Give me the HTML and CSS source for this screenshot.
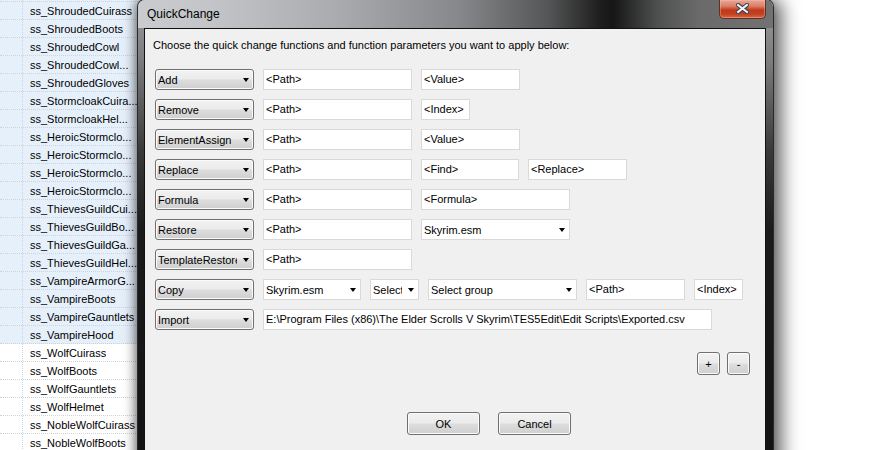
FILE: index.html
```
<!DOCTYPE html>
<html>
<head>
<meta charset="utf-8">
<link rel="stylesheet" href="styles.css">
</head>
<body>
<div class="list">
  <div class="row sel"><span class="gut"></span><span class="name">ss_ShroudedArmor</span></div>
  <div class="row sel"><span class="gut"></span><span class="name">ss_ShroudedCuirass</span></div>
  <div class="row sel"><span class="gut"></span><span class="name">ss_ShroudedBoots</span></div>
  <div class="row sel"><span class="gut"></span><span class="name">ss_ShroudedCowl</span></div>
  <div class="row sel"><span class="gut"></span><span class="name">ss_ShroudedCowl...</span></div>
  <div class="row sel"><span class="gut"></span><span class="name">ss_ShroudedGloves</span></div>
  <div class="row sel"><span class="gut"></span><span class="name">ss_StormcloakCuira...</span></div>
  <div class="row sel"><span class="gut"></span><span class="name">ss_StormcloakHel...</span></div>
  <div class="row sel"><span class="gut"></span><span class="name">ss_HeroicStormclo...</span></div>
  <div class="row sel"><span class="gut"></span><span class="name">ss_HeroicStormclo...</span></div>
  <div class="row sel"><span class="gut"></span><span class="name">ss_HeroicStormclo...</span></div>
  <div class="row sel"><span class="gut"></span><span class="name">ss_HeroicStormclo...</span></div>
  <div class="row sel"><span class="gut"></span><span class="name">ss_ThievesGuildCui...</span></div>
  <div class="row sel"><span class="gut"></span><span class="name">ss_ThievesGuildBo...</span></div>
  <div class="row sel"><span class="gut"></span><span class="name">ss_ThievesGuildGa...</span></div>
  <div class="row sel"><span class="gut"></span><span class="name">ss_ThievesGuildHel...</span></div>
  <div class="row sel"><span class="gut"></span><span class="name">ss_VampireArmorG...</span></div>
  <div class="row sel"><span class="gut"></span><span class="name">ss_VampireBoots</span></div>
  <div class="row sel"><span class="gut"></span><span class="name">ss_VampireGauntlets</span></div>
  <div class="row sel"><span class="gut"></span><span class="name">ss_VampireHood</span></div>
  <div class="row"><span class="gut"></span><span class="name">ss_WolfCuirass</span></div>
  <div class="row"><span class="gut"></span><span class="name">ss_WolfBoots</span></div>
  <div class="row"><span class="gut"></span><span class="name">ss_WolfGauntlets</span></div>
  <div class="row"><span class="gut"></span><span class="name">ss_WolfHelmet</span></div>
  <div class="row"><span class="gut"></span><span class="name">ss_NobleWolfCuirass</span></div>
  <div class="row"><span class="gut"></span><span class="name">ss_NobleWolfBoots</span></div>
</div>

<div class="window">
  <div class="titlebar">
    <span class="title">QuickChange</span>
    <div class="close">
      <svg width="13" height="11" viewBox="0 0 13 11">
        <path d="M2 2 L11 9 M11 2 L2 9" stroke="#3b3f4e" stroke-width="4.2" stroke-linecap="square" fill="none"/>
        <path d="M2 2 L11 9 M11 2 L2 9" stroke="#f4f4f6" stroke-width="2" stroke-linecap="square" fill="none"/>
      </svg>
    </div>
  </div>
  <div class="client">
    <p class="desc">Choose the quick change functions and function parameters you want to apply below:</p>
    <div class="rows">
      <div class="frow">
        <div class="combo btn w99"><span class="ctext">Add</span><i class="arrow"></i></div>
        <div class="field w149">&lt;Path&gt;</div>
        <div class="field w99">&lt;Value&gt;</div>
      </div>
      <div class="frow">
        <div class="combo btn w99"><span class="ctext">Remove</span><i class="arrow"></i></div>
        <div class="field w149">&lt;Path&gt;</div>
        <div class="field w49">&lt;Index&gt;</div>
      </div>
      <div class="frow">
        <div class="combo btn w99"><span class="ctext">ElementAssign</span><i class="arrow"></i></div>
        <div class="field w149">&lt;Path&gt;</div>
        <div class="field w99">&lt;Value&gt;</div>
      </div>
      <div class="frow">
        <div class="combo btn w99"><span class="ctext">Replace</span><i class="arrow"></i></div>
        <div class="field w149">&lt;Path&gt;</div>
        <div class="field w98">&lt;Find&gt;</div>
        <div class="field w99">&lt;Replace&gt;</div>
      </div>
      <div class="frow">
        <div class="combo btn w99"><span class="ctext">Formula</span><i class="arrow"></i></div>
        <div class="field w149">&lt;Path&gt;</div>
        <div class="field w149">&lt;Formula&gt;</div>
      </div>
      <div class="frow">
        <div class="combo btn w99"><span class="ctext">Restore</span><i class="arrow"></i></div>
        <div class="field w149">&lt;Path&gt;</div>
        <div class="combo white w149"><span class="ctext">Skyrim.esm</span><i class="arrow"></i></div>
      </div>
      <div class="frow">
        <div class="combo btn w99"><span class="ctext">TemplateRestore</span><i class="arrow"></i></div>
        <div class="field w149">&lt;Path&gt;</div>
      </div>
      <div class="frow">
        <div class="combo btn w99"><span class="ctext">Copy</span><i class="arrow"></i></div>
        <div class="combo white w98"><span class="ctext">Skyrim.esm</span><i class="arrow"></i></div>
        <div class="combo white w49"><span class="ctext">Select</span><i class="arrow"></i></div>
        <div class="combo white w149"><span class="ctext">Select group</span><i class="arrow"></i></div>
        <div class="field w99">&lt;Path&gt;</div>
        <div class="field w49">&lt;Index&gt;</div>
      </div>
      <div class="frow">
        <div class="combo btn w99"><span class="ctext">Import</span><i class="arrow"></i></div>
        <div class="field w449">E:\Program Files (x86)\The Elder Scrolls V Skyrim\TES5Edit\Edit Scripts\Exported.csv</div>
      </div>
    </div>
    <div class="pm">
      <button class="btn small">+</button>
      <button class="btn small">-</button>
    </div>
    <div class="okrow">
      <button class="btn wide">OK</button>
      <button class="btn wide">Cancel</button>
    </div>
  </div>
</div>
</body>
</html>
```
FILE: styles.css
```
html, body {
  margin: 0;
  padding: 0;
  background: #ffffff;
  overflow: hidden;
  height: 450px;
}
body {
  font-family: "Liberation Sans", Arial, sans-serif;
  font-size: 11px;
  color: #000;
  position: relative;
}

/* background list */
.list {
  width: 142px;
  margin-top: -16px;
}
.row {
  display: flex;
  height: 18px;
  box-sizing: border-box;
  border-bottom: 1px dotted #cdd3da;
  line-height: 18px;
  background: #fff;
}
.row.sel {
  background: #e6f0fb;
}
.gut {
  width: 22px;
  flex: none;
  border-right: 1px dotted #cdd3da;
}
.name {
  padding-left: 7px;
  white-space: nowrap;
}

/* dialog window */
.window {
  position: absolute;
  left: 138px;
  top: 0;
  width: 635px;
  height: 480px;
  border-radius: 7px 7px 0 0;
  background: linear-gradient(to bottom, #9a9b9d 0, #7c7d7f 60px, #3a3a3a 150px, #1b1b1b 230px, #121212 100%);
  box-shadow: 0 0 0 1px #2a2a2a, 6px 2px 18px 3px rgba(0,0,0,0.6), -3px 0 10px rgba(0,0,0,0.35);
  display: flex;
  flex-direction: column;
}
.titlebar {
  position: relative;
  height: 28px;
  flex: none;
  display: flex;
  align-items: center;
  padding-left: 9px;
  border-radius: 7px 7px 0 0;
  background: linear-gradient(90deg, #c9cbce 0px, #c3c5c8 70px, #a9abae 200px, #86888b 320px, #555657 410px, #1e1e1e 462px, #161616 475px, #4f5050 520px, #6a6a6a 560px, #727272 635px);
}
.title {
  font-size: 12px;
  color: #000;
  padding-bottom: 1px;
}
.close {
  position: absolute;
  top: 0;
  right: 7px;
  width: 45px;
  height: 18px;
  border: 1px solid #5e3027;
  border-top: none;
  border-radius: 0 0 5px 5px;
  background: linear-gradient(to bottom, #e8a898 0%, #d97d66 35%, #c2391c 55%, #c0401f 78%, #d9694a 100%);
  box-shadow: inset 0 0 0 1px rgba(255,200,180,0.35);
  display: flex;
  align-items: center;
  justify-content: center;
}
.close svg {
  display: block;
  margin-top: -1px;
}

.client {
  flex: 1;
  margin: 0 7px 0 6px;
  border: 1px solid #111;
  border-bottom: none;
  background: #f0f0f0;
}
.desc {
  margin: 0;
  padding: 9px 0 0 8px;
  line-height: 14px;
}
.rows {
  margin-top: 17px;
  padding-left: 10px;
  display: flex;
  flex-direction: column;
  gap: 9px;
}
.frow {
  display: flex;
  gap: 9px;
  height: 21px;
}
.w49 { width: 49px; }
.w98 { width: 98px; }
.w99 { width: 99px; }
.w149 { width: 149px; }
.w449 { width: 449px; }

.field {
  box-sizing: border-box;
  height: 21px;
  border: 1px solid #d9d9d9;
  background: #fff;
  padding: 0 2px;
  line-height: 19px;
  white-space: nowrap;
  overflow: hidden;
}
.combo {
  box-sizing: border-box;
  height: 21px;
  display: flex;
  align-items: center;
  padding: 0 4px 0 2px;
}
.combo.white {
  border: 1px solid #d9d9d9;
  background: #fff;
}
.ctext {
  flex: 1;
  min-width: 0;
  overflow: hidden;
  white-space: nowrap;
}
.arrow {
  flex: none;
  width: 0;
  height: 0;
  margin-left: 6px;
  border-left: 3.5px solid transparent;
  border-right: 3.5px solid transparent;
  border-top: 4px solid #000;
}

.btn {
  border: 1px solid #707070;
  border-radius: 3px;
  background: linear-gradient(to bottom, #f2f2f2 0%, #ebebeb 48%, #dddddd 52%, #cfcfcf 100%);
  box-shadow: inset 0 0 0 1px #fbfbfb;
}
.combo.btn {
  padding-left: 2px;
}

button.btn {
  font-family: "Liberation Sans", Arial, sans-serif;
  font-size: 11px;
  color: #000;
  padding: 0;
  margin: 0;
  box-sizing: border-box;
}
.pm {
  display: flex;
  justify-content: flex-end;
  gap: 7px;
  padding-right: 15px;
  margin-top: 22px;
}
.small {
  width: 23px;
  height: 23px;
  line-height: 20px;
}
.okrow {
  display: flex;
  gap: 18px;
  margin-top: 37px;
  padding-left: 262px;
}
.wide {
  width: 73px;
  height: 23px;
}
```
